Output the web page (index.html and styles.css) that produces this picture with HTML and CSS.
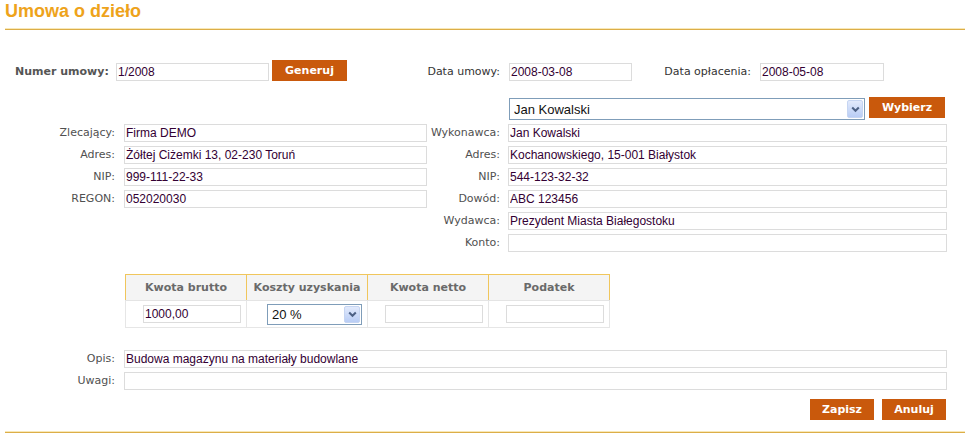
FILE: index.html
```html
<!DOCTYPE html>
<html lang="pl">
<head>
<meta charset="utf-8">
<title>Umowa o dzieło</title>
<link rel="stylesheet" href="styles.css">
</head>
<body>
<div class="page">
  <h1 class="title">Umowa o dzieło</h1>

  <div class="row-top">
    <label class="lbl-strong">Numer umowy:</label>
    <input class="inp inp-num" value="1/2008">
    <button class="btn btn-gen">Generuj</button>
    <label class="lbl lbl-date1">Data umowy:</label>
    <input class="inp inp-date1" value="2008-03-08">
    <label class="lbl lbl-date2">Data opłacenia:</label>
    <input class="inp inp-date2" value="2008-05-08">
  </div>

  <div class="row-pick">
    <div class="sel sel-wide">
      <select><option>Jan Kowalski</option></select>
      <span class="sel-arrow"><svg width="9" height="7" viewBox="0 0 9 7"><path d="M1.2 1.5 L4.5 4.8 L7.8 1.5" fill="none" stroke="#4D6185" stroke-width="2"/></svg></span>
    </div>
    <button class="btn btn-pick">Wybierz</button>
  </div>

  <div class="parties">
    <div class="grid-left">
      <label class="fl">Zlecający:</label><input class="inp" value="Firma DEMO">
      <label class="fl">Adres:</label><input class="inp" value="Żółtej Ciżemki 13, 02-230 Toruń">
      <label class="fl">NIP:</label><input class="inp" value="999-111-22-33">
      <label class="fl">REGON:</label><input class="inp" value="052020030">
    </div>
    <div class="grid-right">
      <label class="fl">Wykonawca:</label><input class="inp" value="Jan Kowalski">
      <label class="fl">Adres:</label><input class="inp" value="Kochanowskiego, 15-001 Białystok">
      <label class="fl">NIP:</label><input class="inp" value="544-123-32-32">
      <label class="fl">Dowód:</label><input class="inp" value="ABC 123456">
      <label class="fl">Wydawca:</label><input class="inp" value="Prezydent Miasta Białegostoku">
      <label class="fl">Konto:</label><input class="inp" value="">
    </div>
  </div>

  <table class="calc">
    <thead>
      <tr><th>Kwota brutto</th><th>Koszty uzyskania</th><th>Kwota netto</th><th>Podatek</th></tr>
    </thead>
    <tbody>
      <tr>
        <td><input class="inp inp-cell" value="1000,00"></td>
        <td><div class="sel sel-small"><select><option>20 %</option></select><span class="sel-arrow"><svg width="9" height="7" viewBox="0 0 9 7"><path d="M1.2 1.5 L4.5 4.8 L7.8 1.5" fill="none" stroke="#4D6185" stroke-width="2"/></svg></span></div></td>
        <td><input class="inp inp-cell" value=""></td>
        <td><input class="inp inp-cell" value=""></td>
      </tr>
    </tbody>
  </table>

  <div class="grid-notes">
    <label class="fl">Opis:</label><input class="inp" value="Budowa magazynu na materiały budowlane">
    <label class="fl">Uwagi:</label><input class="inp" value="">
  </div>

  <div class="actions">
    <button class="btn btn-act">Zapisz</button>
    <button class="btn btn-act">Anuluj</button>
  </div>

  <div class="footer-line"></div>
</div>
</body>
</html>
```

FILE: styles.css
```css
* { box-sizing: border-box; }

body {
  margin: 0;
  background: #fff;
  font-family: "DejaVu Sans", Verdana, sans-serif;
  font-size: 11px;
  color: #444;
}

.page {
  width: 960px;
  margin-left: 5px;
}

.title {
  margin: 0;
  height: 30px;
  font: bold 18px/23px "Liberation Sans", Arial, sans-serif;
  color: #EEA31B;
  border-bottom: 1px solid #DCAE48;
  box-shadow: inset 0 -1px 0 #F8E8B8;
}

.inp {
  height: 18px;
  margin: 0;
  padding: 0 1px;
  border: 1px solid #DCDCDC;
  background: #fff;
  font: 12px "Liberation Sans", Arial, sans-serif;
  color: #330033;
  outline: none;
}

.btn {
  height: 21px;
  margin: 0;
  padding: 0;
  border: 0;
  background: #C9590C;
  color: #fff;
  font: bold 11px "DejaVu Sans", Verdana, sans-serif;
}

/* top row */
.row-top {
  display: flex;
  align-items: flex-end;
  height: 21px;
  margin-top: 30px;
}
.lbl-strong {
  width: 101px;
  margin-left: 10px;
  line-height: 18px;
  font-weight: bold;
  color: #555;
  white-space: nowrap;
}
.lbl {
  line-height: 18px;
  color: #333;
  text-align: right;
  white-space: nowrap;
}
.inp-num { width: 153px; }
.btn-gen { width: 75px; margin-left: 3px; }
.lbl-date1 { width: 153px; }
.inp-date1 { width: 123px; margin-left: 9px; }
.lbl-date2 { width: 119px; }
.inp-date2 { width: 124px; margin-left: 9px; }

/* picker row */
.row-pick {
  display: flex;
  align-items: flex-start;
  margin-top: 16px;
  margin-left: 504px;
}
.sel {
  position: relative;
  border: 1px solid #7F9DB9;
  background: #fff;
}
.sel select {
  appearance: none;
  -webkit-appearance: none;
  display: block;
  width: 100%;
  height: 100%;
  margin: 0;
  border: 0;
  outline: none;
  padding: 0 20px 0 4px;
  background: transparent;
  font: 13px "Liberation Sans", Arial, sans-serif;
  color: #111;
}
.sel-arrow {
  position: absolute;
  top: 1px;
  right: 1px;
  bottom: 1px;
  width: 16px;
  display: flex;
  align-items: center;
  justify-content: center;
  border: 1px solid #C6D5F2;
  border-radius: 2px;
  background: linear-gradient(#E2EAFC, #B9CDF5);
  pointer-events: none;
}
.sel-wide {
  width: 356px;
  height: 22px;
  margin-top: 1px;
}
.btn-pick { width: 76px; margin-left: 4px; }

/* parties */
.parties {
  display: flex;
  margin-top: 4px;
}
.grid-left {
  display: grid;
  grid-template-columns: 110px 303px;
  grid-auto-rows: 18px;
  column-gap: 9px;
  row-gap: 4px;
  align-content: start;
  width: 422px;
}
.grid-right {
  display: grid;
  grid-template-columns: 73px 439px;
  grid-auto-rows: 18px;
  column-gap: 8px;
  row-gap: 4px;
}
.fl {
  line-height: 18px;
  text-align: right;
  color: #505050;
  white-space: nowrap;
}
.grid-left .inp,
.grid-right .inp,
.grid-notes .inp { width: 100%; }

/* calc table */
.calc {
  border-collapse: collapse;
  table-layout: fixed;
  width: 485px;
  margin: 22px 0 0 120px;
}
.calc th {
  width: 121px;
  height: 26px;
  padding: 0;
  background: #F4F4F4;
  border: 1px solid #F0C65C;
  border-bottom: 1px solid #E4E4E4;
  font-weight: bold;
  color: #6A6A6A;
  text-align: center;
}
.calc td {
  height: 27px;
  padding: 0 5px 0 0;
  border: 1px solid #E6E6E6;
  border-top: 0;
  text-align: right;
  vertical-align: middle;
}
.inp-cell { width: 98px; vertical-align: middle; }
.sel-small {
  display: inline-block;
  vertical-align: middle;
  width: 95px;
  height: 21px;
  text-align: left;
}

/* notes */
.grid-notes {
  display: grid;
  grid-template-columns: 110px 823px;
  grid-auto-rows: 18px;
  column-gap: 9px;
  row-gap: 4px;
  margin-top: 22px;
}

.actions {
  display: flex;
  justify-content: flex-end;
  gap: 8px;
  margin-top: 9px;
  padding-right: 19px;
}
.btn-act { width: 64px; }

.footer-line {
  margin-top: 12px;
  height: 1px;
  background: #DCAE48;
  box-shadow: 0 -1px 0 #F8E8B8;
}
```
